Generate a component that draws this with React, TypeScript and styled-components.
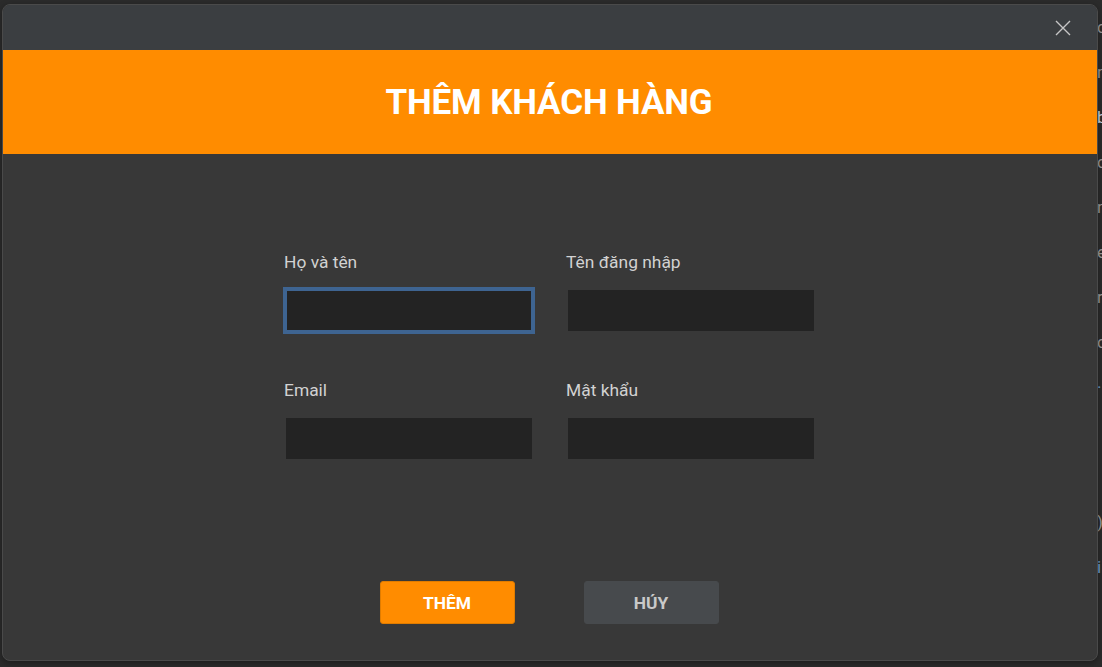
import React from "react";
import styled, { createGlobalStyle } from "styled-components";

const GlobalStyle = createGlobalStyle`
  html, body {
    margin: 0;
    padding: 0;
    background: #2b2b2b;
    overflow: hidden;
  }
  body {
    font-family: Roboto, "Noto Sans", Arial, sans-serif;
  }
  * {
    box-sizing: border-box;
  }
`;

const Screen = styled.div`
  position: relative;
  width: 1102px;
  height: 667px;
  background: #2b2b2b;
  overflow: hidden;
`;

// list of the window behind the modal, only its left edge shows
const Backdrop = styled.div`
  display: flex;
  flex-direction: column;
  padding: 5px 0 0 1097px;
`;

const BackdropRow = styled.div<{ $tone?: "blue" | "light" }>`
  height: 45px;
  line-height: 45px;
  font-size: 17px;
  white-space: nowrap;
  color: ${(p) =>
    p.$tone === "blue" ? "#6f9fd0" : p.$tone === "light" ? "#c9d4e0" : "#9a9a9a"};
`;

const Dialog = styled.div`
  position: absolute;
  left: 2px;
  top: 4px;
  width: 1096px;
  height: 657px;
  display: flex;
  flex-direction: column;
  background: #383838;
  border: 1px solid #4a4a4a;
  border-radius: 8px;
  overflow: hidden;
  box-shadow: 0 2px 6px rgba(0, 0, 0, 0.35);
`;

const TitleBar = styled.div`
  height: 45px;
  flex: none;
  display: flex;
  align-items: center;
  justify-content: flex-end;
  padding-right: 26px;
  background: #3b3e41;
`;

const CloseButton = styled.button`
  width: 16px;
  height: 16px;
  padding: 0;
  border: 0;
  background: none;
  color: #c6c6c6;
  display: flex;
  cursor: pointer;
`;

const Header = styled.div`
  height: 104px;
  flex: none;
  display: flex;
  align-items: center;
  justify-content: center;
  background: #ff8c00;
`;

const Title = styled.h1`
  margin: 0;
  padding-right: 2px;
  font-family: Roboto, Arial, sans-serif;
  font-size: 35px;
  font-weight: 700;
  letter-spacing: -0.15px;
  color: #ffffff;
`;

const Body = styled.div`
  flex: 1;
  display: flex;
  flex-direction: column;
  align-items: center;
  padding-top: 98px;
`;

const Form = styled.div`
  display: grid;
  grid-template-columns: 250px 250px;
  column-gap: 32px;
  row-gap: 49px;
`;

const Field = styled.div`
  display: flex;
  flex-direction: column;
  gap: 18px;
`;

const Label = styled.label`
  height: 20px;
  line-height: 20px;
  font-size: 17.4px;
  color: #d2d2d2;
`;

const Input = styled.input<{ $focused?: boolean }>`
  width: 246px;
  height: 41px;
  margin: 0 2px;
  border: 0;
  outline: none;
  background: #232323;
  color: #e0e0e0;
  font-family: inherit;
  font-size: 16px;
  padding: 0 8px;
  box-shadow: ${(p) =>
    p.$focused ? "0 0 0 3px #3e6491, inset 0 0 0 1px #3e6491" : "none"};
`;

const Actions = styled.div`
  display: flex;
  gap: 69px;
  margin-top: 122px;
  margin-right: 2px;
`;

const Button = styled.button<{ $primary?: boolean }>`
  width: 135px;
  height: 43px;
  border-radius: 3px;
  border: 1px solid ${(p) => (p.$primary ? "#e07c00" : "#474a4d")};
  background: ${(p) => (p.$primary ? "#ff8c00" : "#474a4d")};
  color: ${(p) => (p.$primary ? "#ffffff" : "#c9c9c9")};
  font-family: Roboto, Arial, sans-serif;
  font-size: 17.4px;
  font-weight: 700;
  cursor: pointer;
`;

const backdropRows: { text: string; tone?: "blue" | "light" }[] = [
  { text: "c" },
  { text: "n" },
  { text: "b", tone: "light" },
  { text: "c" },
  { text: "n" },
  { text: "e" },
  { text: "r" },
  { text: "c" },
  { text: "·", tone: "blue" },
  { text: "" },
  { text: "" },
  { text: ")" },
  { text: "i", tone: "blue" },
];

export default function App() {
  return (
    <Screen>
      <GlobalStyle />
      <Backdrop>
        {backdropRows.map((r, i) => (
          <BackdropRow key={i} $tone={r.tone}>
            {r.text}
          </BackdropRow>
        ))}
      </Backdrop>

      <Dialog>
        <TitleBar>
          <CloseButton aria-label="Đóng">
            <svg width="16" height="16" viewBox="0 0 16 16">
              <path
                d="M1 1 L15 15 M15 1 L1 15"
                stroke="currentColor"
                strokeWidth="1.4"
                fill="none"
              />
            </svg>
          </CloseButton>
        </TitleBar>
        <Header>
          <Title>THÊM KHÁCH HÀNG</Title>
        </Header>
        <Body>
          <Form>
            <Field>
              <Label>Họ và tên</Label>
              <Input $focused />
            </Field>
            <Field>
              <Label>Tên đăng nhập</Label>
              <Input />
            </Field>
            <Field>
              <Label>Email</Label>
              <Input />
            </Field>
            <Field>
              <Label>Mật khẩu</Label>
              <Input type="password" />
            </Field>
          </Form>
          <Actions>
            <Button $primary>THÊM</Button>
            <Button>HÚY</Button>
          </Actions>
        </Body>
      </Dialog>
    </Screen>
  );
}
